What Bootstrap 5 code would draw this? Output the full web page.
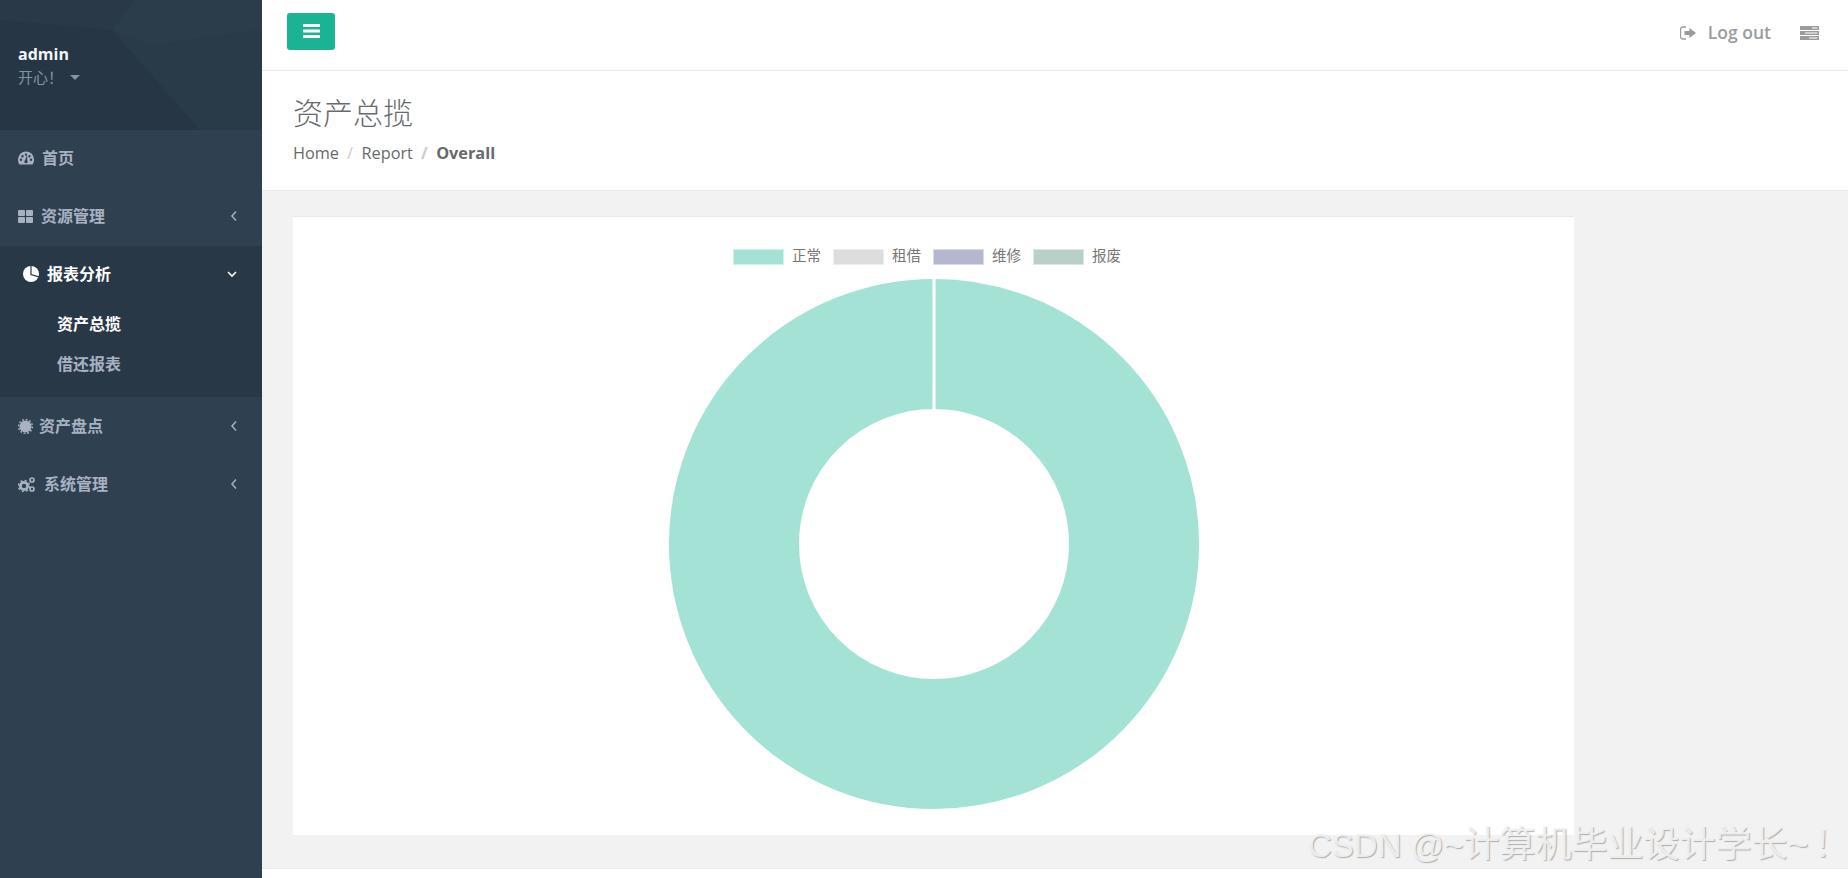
<!DOCTYPE html>
<html lang="en">
<head>
  <meta charset="UTF-8">
  <title>资产总揽</title>
  <link href="https://cdn.jsdelivr.net/npm/bootstrap@5.3.0/dist/css/bootstrap.min.css" rel="stylesheet">
  <style>
    html, body {
      height: 100%;
      overflow: hidden;
    }
    body {
      font-family: "Open Sans", "Noto Sans CJK SC", sans-serif;
      background: #2f4050;
      color: #676a6c;
    }
    .app-shell {
      height: 878px;
      position: relative;
    }
    /* sidebar */
    .side-bar {
      width: 262px;
      flex: none;
      background: #2f4050;
    }
    .side-profile {
      height: 130px;
      padding: 43px 18px 0;
      background: #263645;
      position: relative;
      overflow: hidden;
    }
    .side-profile svg {
      position: absolute;
      left: 0;
      top: 0;
    }
    .profile-name {
      position: relative;
      color: #f3f5f8;
      font-weight: 700;
      font-size: 16px;
      line-height: 22px;
    }
    .profile-mood {
      position: relative;
      color: #8095a8;
      font-size: 15px;
      line-height: 24px;
    }
    .mood-caret {
      display: inline-block;
      margin-left: 7px;
      vertical-align: 3px;
      border-left: 5px solid transparent;
      border-right: 5px solid transparent;
      border-top: 5px solid #8095a8;
    }
    .side-link {
      height: 58px;
      padding: 0 24px 2px 18px;
      color: #a7b1c2;
      font-size: 16px;
      font-weight: 600;
      gap: 8px;
    }
    .side-link .link-label {
      flex: 1;
    }
    .side-link.gap-tight {
      gap: 6px;
    }
    .side-link.sit-low {
      padding-bottom: 0;
    }
    .side-link svg {
      fill: currentColor;
      flex: none;
    }
    .side-group {
      background: #293846;
      height: 151px;
    }
    .side-group .side-link {
      color: #fff;
      padding-left: 23px;
      padding-right: 25px;
      font-weight: 700;
    }
    .side-sub {
      display: block;
      padding-left: 57px;
      height: 40px;
      line-height: 24px;
      color: #a7b1c2;
      font-size: 16px;
      font-weight: 700;
    }
    .side-sub.is-current {
      color: #fff;
      margin-top: 8px;
    }
    /* top bar */
    .main-area {
      min-width: 0;
      background: #f2f2f2;
    }
    .top-strip {
      height: 71px;
      flex: none;
      background: #fff;
      border-bottom: 1px solid #e7eaec;
      padding: 0 29px 3px 25px;
    }
    .menu-toggle {
      width: 48px;
      height: 37px;
      padding: 0;
      background: #1ab394;
      border: 0;
      border-radius: 3px;
      margin-top: -5px;
    }
    .top-action {
      color: #999c9e;
      font-size: 17.5px;
      font-weight: 600;
      margin-top: -2px;
    }
    .top-action svg {
      fill: #999c9e;
    }
    .task-glyph {
      margin-left: 29px;
    }
    /* heading */
    .page-head {
      height: 120px;
      flex: none;
      background: #fff;
      border-bottom: 1px solid #e7eaec;
      padding: 21px 31px 0;
    }
    .page-title {
      font-size: 30px;
      font-weight: 300;
      line-height: 42px;
      margin: 0 0 7px;
      color: #676a6c;
    }
    .page-crumbs {
      margin: 0;
      font-size: 16.3px;
      --bs-breadcrumb-divider-color: #ccc;
      --bs-breadcrumb-item-padding-x: 8px;
    }
    .page-crumbs .breadcrumb-item {
      color: #676a6c;
    }
    .page-crumbs .breadcrumb-item + .breadcrumb-item::before {
      color: #ccc;
      padding-right: 8.5px;
    }
    .page-crumbs .breadcrumb-item.active {
      font-weight: 700;
      color: #676a6c;
    }
    .page-crumbs .breadcrumb-item + .breadcrumb-item {
      padding-left: 8px;
    }
    /* chart */
    .chart-zone {
      flex: 1;
      padding: 25px 31px 0;
      min-height: 0;
    }
    .chart-panel {
      width: 1281px;
      height: 619px;
      background: #fff;
      border: 0;
      border-top: 1px solid #e7eaec;
      border-radius: 0;
    }
    .chart-legend {
      height: 61px;
      padding: 15px 0 0 440px;
      font-size: 14.5px;
      line-height: 16px;
      color: #777;
      font-family: "Noto Sans CJK SC", sans-serif;
    }
    .legend-entry {
      gap: 8px;
      margin-right: 12px;
    }
    .legend-swatch {
      width: 51px;
      height: 16px;
      margin-top: 4px;
      border: 1px solid rgba(255, 255, 255, .5);
    }
    .swatch-ok { background: #a4e2d5; }
    .swatch-rent { background: #dddddd; }
    .swatch-fix { background: #b5b7d1; }
    .swatch-scrap { background: #b8d0c9; }
    .page-foot {
      height: 10px;
      flex: none;
      background: #fff;
      border-top: 1px solid #e7eaec;
    }
    .water-stamp {
      position: absolute;
      left: 1308px;
      top: 825px;
      font-family: "Liberation Sans", "Noto Sans CJK SC", sans-serif;
      font-size: 33px;
      line-height: 40px;
      white-space: nowrap;
      color: rgba(244, 244, 244, .9);
      text-shadow: 1px 1px 1px rgba(120, 120, 120, .55);
    }
    .stamp-wide {
      font-size: 36px;
    }
    .stamp-tail {
      font-size: 36px;
      letter-spacing: 5px;
    }
  </style>
</head>
<body>
  <div class="app-shell d-flex">
    <nav class="side-bar d-flex flex-column">
      <div class="side-profile">
        <svg width="262" height="130" viewBox="0 0 262 130">
          <path d="M112 30L135 0H262V130H200Z" fill="#293a49"/>
          <path d="M0 0H135L112 30L0 20Z" fill="#293947"/>
          <path d="M112 30L135 0H262V30L150 45Z" fill="#2b3c4a"/>
        </svg>
        <div class="profile-name">admin</div>
        <div class="profile-mood">开心！<span class="mood-caret"></span></div>
      </div>
      <ul class="nav flex-column flex-nowrap">
        <li class="nav-item">
          <a class="side-link d-flex align-items-center text-decoration-none" href="#">
            <svg width="16" height="14" viewBox="0 0 16 14"><path d="M8 .5a8 8 0 0 0-8 8c0 1.900.5 3.500 1.300 5h13.400A9 9 0 0 0 16 8.500a8 8 0 0 0-8-8zM3 10a1.200 1.200 0 1 1 0-2.400 1.200 1.200 0 0 1 0 2.400zm1.500-3.600a1.200 1.200 0 1 1 0-2.400 1.200 1.200 0 0 1 0 2.400zM8 4.800a1.200 1.200 0 1 1 0-2.400 1.200 1.200 0 0 1 0 2.400zm-.1 7.400a1.600 1.600 0 0 1-.7-3l1.300-3.900h.8l-.2 4.100a1.600 1.600 0 0 1-1.200 2.800zM11.500 6.400a1.200 1.200 0 1 1 0-2.400 1.200 1.200 0 0 1 0 2.400zM13 10a1.200 1.200 0 1 1 0-2.400 1.200 1.200 0 0 1 0 2.400z" fill-rule="evenodd"/></svg>
            <span class="link-label">首页</span>
          </a>
        </li>
        <li class="nav-item">
          <a class="side-link d-flex align-items-center text-decoration-none" href="#">
            <svg width="15" height="13" viewBox="0 0 15 13"><rect width="7" height="6" rx="1"/><rect x="8" width="7" height="6" rx="1"/><rect y="7" width="7" height="6" rx="1"/><rect x="8" y="7" width="7" height="6" rx="1"/></svg>
            <span class="link-label">资源管理</span>
            <svg width="8" height="12" viewBox="0 0 8 12"><path d="M6 1.500L2 6l4 4.500" fill="none" stroke="currentColor" stroke-width="1.500"/></svg>
          </a>
        </li>
        <li class="nav-item side-group">
          <a class="side-link d-flex align-items-center text-decoration-none" href="#">
            <svg width="16" height="16" viewBox="0 0 16 16"><circle cx="8" cy="8" r="8"/><path d="M8 0V8.500L16 11" fill="none" stroke="#293846" stroke-width="1.200"/></svg>
            <span class="link-label">报表分析</span>
            <svg width="10" height="8" viewBox="0 0 10 8"><path d="M1 2l4 4 4-4" fill="none" stroke="currentColor" stroke-width="1.600"/></svg>
          </a>
          <a class="side-sub is-current text-decoration-none" href="#">资产总揽</a>
          <a class="side-sub text-decoration-none" href="#">借还报表</a>
        </li>
        <li class="nav-item">
          <a class="side-link sit-low gap-tight d-flex align-items-center text-decoration-none" href="#">
            <svg width="15" height="15" viewBox="0 0 15 15"><circle cx="7.500" cy="7.500" r="6"/><circle cx="7.500" cy="7.500" r="6.900" fill="none" stroke="currentColor" stroke-width="1.500" stroke-dasharray="1.800 1.813"/></svg>
            <span class="link-label">资产盘点</span>
            <svg width="8" height="12" viewBox="0 0 8 12"><path d="M6 1.500L2 6l4 4.500" fill="none" stroke="currentColor" stroke-width="1.500"/></svg>
          </a>
        </li>
        <li class="nav-item">
          <a class="side-link sit-low d-flex align-items-center text-decoration-none" href="#">
            <svg width="18" height="15" viewBox="0 0 18 15"><circle cx="6" cy="9" r="3.600" fill="none" stroke="currentColor" stroke-width="2.800"/><circle cx="6" cy="9" r="5.600" fill="none" stroke="currentColor" stroke-width="1.500" stroke-dasharray="2 2.400"/><circle cx="14" cy="3" r="2" fill="none" stroke="currentColor" stroke-width="1.700"/><circle cx="14" cy="12" r="2" fill="none" stroke="currentColor" stroke-width="1.700"/></svg>
            <span class="link-label">系统管理</span>
            <svg width="8" height="12" viewBox="0 0 8 12"><path d="M6 1.500L2 6l4 4.500" fill="none" stroke="currentColor" stroke-width="1.500"/></svg>
          </a>
        </li>
      </ul>
    </nav>

    <div class="main-area flex-grow-1 d-flex flex-column">
      <header class="top-strip d-flex align-items-center justify-content-between">
        <button class="menu-toggle btn d-flex align-items-center justify-content-center" type="button">
          <svg width="17" height="14" viewBox="0 0 17 14" fill="#fff"><rect width="17" height="3" rx=".5"/><rect y="5.500" width="17" height="3" rx=".5"/><rect y="11" width="17" height="3" rx=".5"/></svg>
        </button>
        <div class="d-flex align-items-center top-action">
          <svg width="16" height="14" viewBox="0 0 16 14" class="me-2"><path d="M6 1H3a2.500 2.500 0 0 0-2.500 2.500v7A2.500 2.500 0 0 0 3 13h3" fill="none" stroke="#999c9e" stroke-width="1.300"/><path d="M9.500 2L16 7l-6.500 5V9H4.500V5h5z"/></svg>
          <span class="ms-1">Log out</span>
          <svg width="19" height="14" viewBox="0 0 19 14" class="task-glyph"><path d="M0 0h19v4H0zM0 5h19v4H0zM0 10h19v4H0z"/><path d="M12 1.500h5.500v1H12zM5 6.500h12.500v1H5zM9 11.500h8.500v1H9z" fill="#fff"/></svg>
        </div>
      </header>

      <section class="page-head">
        <h2 class="page-title">资产总揽</h2>
        <ol class="breadcrumb page-crumbs">
          <li class="breadcrumb-item">Home</li>
          <li class="breadcrumb-item">Report</li>
          <li class="breadcrumb-item active">Overall</li>
        </ol>
      </section>

      <section class="chart-zone">
        <div class="card chart-panel">
          <div class="chart-legend d-flex">
            <div class="legend-entry d-flex align-items-center"><span class="legend-swatch swatch-ok"></span>正常</div>
            <div class="legend-entry d-flex align-items-center"><span class="legend-swatch swatch-rent"></span>租借</div>
            <div class="legend-entry d-flex align-items-center"><span class="legend-swatch swatch-fix"></span>维修</div>
            <div class="legend-entry d-flex align-items-center"><span class="legend-swatch swatch-scrap"></span>报废</div>
          </div>
          <div class="d-flex justify-content-center">
            <svg width="532" height="532" viewBox="0 0 532 532">
              <circle cx="266" cy="266" r="200" fill="none" stroke="#a4e2d5" stroke-width="130"/>
              <rect x="264.500" y="0" width="3" height="134" fill="#fff"/>
            </svg>
          </div>
        </div>
      </section>

      <footer class="page-foot"></footer>
    </div>

    <div class="water-stamp">CSDN @~<span class="stamp-wide">计算机毕业设计学长</span><span class="stamp-tail">~</span><span class="stamp-wide">！</span></div>
  </div>
  <script src="https://cdn.jsdelivr.net/npm/bootstrap@5.3.0/dist/js/bootstrap.bundle.min.js"></script>
</body>
</html>
